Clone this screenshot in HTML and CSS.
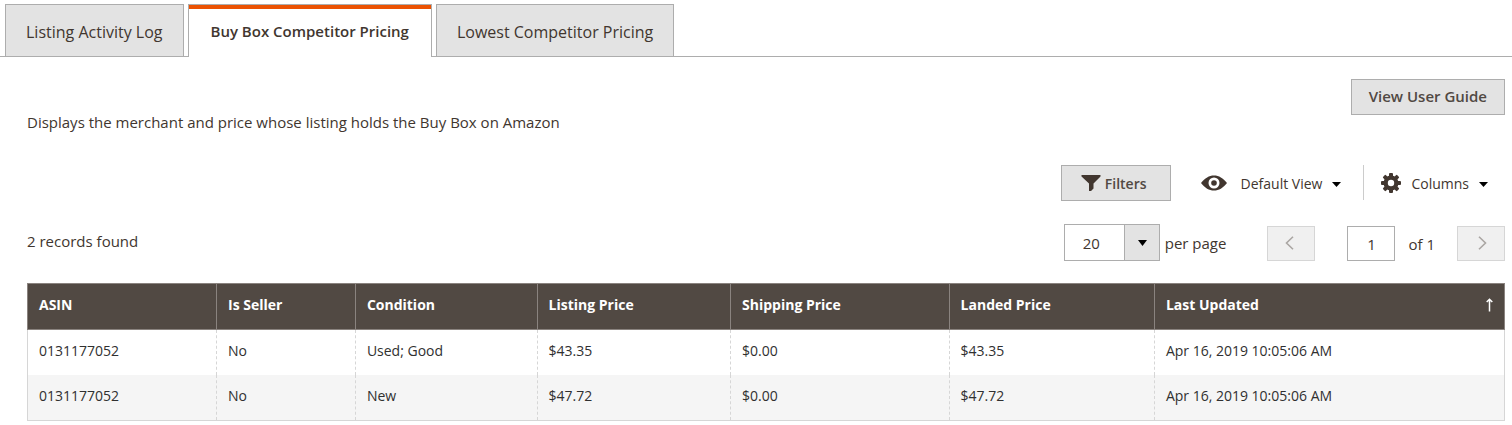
FILE: index.html
```html
<!DOCTYPE html>
<html lang="en">
<head>
<meta charset="utf-8">
<meta name="viewport" content="width=device-width, initial-scale=1">
<title>Buy Box Competitor Pricing</title>
<link rel="stylesheet" href="styles.css">
</head>
<body>
<nav class="tabs" aria-label="Listing details">
  <a class="tab" href="#activity">Listing Activity Log</a>
  <a class="tab tab-active" href="#buybox" aria-current="page">Buy Box Competitor Pricing</a>
  <a class="tab" href="#lowest">Lowest Competitor Pricing</a>
</nav>
<main class="content">
  <header class="intro">
    <p class="description">Displays the merchant and price whose listing holds the Buy Box on Amazon</p>
    <button class="button guide" type="button">View User Guide</button>
  </header>
  <div class="toolbar">
    <button class="button filters" type="button">
      <svg width="20" height="18" viewBox="0 0 20 18" aria-hidden="true"><path fill="#41362f" d="M0.500 1H19.500V2.500L12.500 9.500V14.500L10 17H8V9.500L0.500 2.500Z"/></svg>
      <span>Filters</span>
    </button>
    <button class="action view" type="button">
      <svg width="26" height="16" viewBox="0 0 26 16" aria-hidden="true"><path fill="#41362f" fill-rule="evenodd" d="M0 8C4 3 8 .5 13 .5S22 3 26 8C22 13 18 15.500 13 15.500S4 13 0 8ZM13 2.500A5.500 5.500 0 1 0 13 13.500A5.500 5.500 0 1 0 13 2.500Z"/><circle cx="13" cy="8" r="2.800" fill="#41362f"/></svg>
      <span class="action-label">Default View</span>
      <svg class="caret" width="9" height="5" viewBox="0 0 9 5" aria-hidden="true"><path d="M0 0H9L4.500 5Z"/></svg>
    </button>
    <button class="action columns" type="button">
      <svg width="20" height="20" viewBox="-10 -10 20 20" aria-hidden="true">
        <g fill="#41362f">
          <rect x="-2" y="-10" width="4" height="20" rx="1"/>
          <rect x="-2" y="-10" width="4" height="20" rx="1" transform="rotate(45)"/>
          <rect x="-2" y="-10" width="4" height="20" rx="1" transform="rotate(90)"/>
          <rect x="-2" y="-10" width="4" height="20" rx="1" transform="rotate(135)"/>
          <circle r="7.500"/>
        </g>
        <circle r="3.200" fill="#fff"/>
      </svg>
      <span class="action-label">Columns</span>
      <svg class="caret" width="9" height="5" viewBox="0 0 9 5" aria-hidden="true"><path d="M0 0H9L4.500 5Z"/></svg>
    </button>
  </div>
  <div class="summary">
    <p class="records">2 records found</p>
    <div class="pager">
      <div class="limit">
        <span class="select-box">
          <select class="size" id="page-size"><option>20</option><option>30</option><option>50</option></select>
          <svg class="select-caret" width="9" height="6" viewBox="0 0 9 6" aria-hidden="true"><path d="M0 0H9L4.500 6Z"/></svg>
        </span>
        <label for="page-size">per page</label>
      </div>
      <button class="step" type="button" aria-label="Previous page" disabled>
        <svg width="9" height="14" viewBox="0 0 9 14" aria-hidden="true"><path d="M8 .7L1.500 7L8 13.300"/></svg>
      </button>
      <div class="page">
        <input class="page-input" id="page-number" type="text" value="1">
        <label for="page-number">of 1</label>
      </div>
      <button class="step step-next" type="button" aria-label="Next page" disabled>
        <svg width="9" height="14" viewBox="0 0 9 14" aria-hidden="true"><path d="M1 .7L7.500 7L1 13.300"/></svg>
      </button>
    </div>
  </div>
  <table class="grid">
    <colgroup>
      <col class="col-asin"><col class="col-seller"><col class="col-condition"><col class="col-listing"><col class="col-shipping"><col class="col-landed"><col>
    </colgroup>
    <thead>
      <tr>
        <th scope="col">ASIN</th><th scope="col">Is Seller</th><th scope="col">Condition</th><th scope="col">Listing Price</th><th scope="col">Shipping Price</th><th scope="col">Landed Price</th>
        <th scope="col" aria-sort="ascending"><div class="sorted"><span>Last Updated</span><svg width="7" height="14" viewBox="0 0 7 14" aria-hidden="true"><path d="M3.500 13.500V1.500M.7 4L3.500 1.200L6.300 4"/></svg></div></th>
      </tr>
    </thead>
    <tbody>
      <tr><td>0131177052</td><td>No</td><td>Used; Good</td><td>$43.35</td><td>$0.00</td><td>$43.35</td><td>Apr 16, 2019 10:05:06 AM</td></tr>
      <tr><td>0131177052</td><td>No</td><td>New</td><td>$47.72</td><td>$0.00</td><td>$47.72</td><td>Apr 16, 2019 10:05:06 AM</td></tr>
    </tbody>
  </table>
</main>
</body>
</html>
```
FILE: styles.css
```css
* {
  box-sizing: border-box;
}

body {
  margin: 0;
  background: #fff;
  color: #41362f;
  font: 15px/20px "Open Sans", sans-serif;
}

p {
  margin: 0;
}

button,
input,
select {
  color: inherit;
  font: inherit;
}

.tabs {
  display: flex;
  gap: 4px;
  padding: 4px 0 0 5px;
  box-shadow: inset 0 -1px #adadad;
}

.tab {
  height: 53px;
  padding: 17px 20px 0;
  border: 1px solid #adadad;
  background: #e3e3e3;
  color: inherit;
  font-size: 16px;
  text-decoration: none;
  white-space: nowrap;
}

.tab-active {
  padding: 16px 22px 0;
  border-bottom: 0;
  background: #fff;
  box-shadow: inset 0 4px #eb5202;
  font-size: 15px;
  font-weight: 600;
}

.content {
  padding: 22px 7px 0 27px;
}

.intro {
  display: flex;
  justify-content: space-between;
  height: 54px;
}

.description {
  align-self: flex-end;
  padding-bottom: 1px;
}

.button {
  height: 36px;
  padding: 0 17px 2px;
  border: 1px solid #adadad;
  background: #e3e3e3;
  color: #514943;
  font-weight: 600;
}

.toolbar {
  display: flex;
  justify-content: flex-end;
  margin-top: 32px;
  font-size: 14px;
}

.filters {
  display: flex;
  align-items: center;
  gap: 4px;
  padding: 0 23px 0 19px;
}

.filters span,
.action-label {
  padding-top: 2px;
}

.action {
  display: flex;
  align-items: center;
  height: 35px;
  padding: 0;
  border: 0;
  background: none;
}

.view {
  gap: 14px;
  padding: 0 22px 0 30px;
  border-right: 1px solid #ccc;
}

.columns {
  gap: 10px;
  padding: 0 17px;
}

.caret {
  margin-top: 3px;
}

.view .caret {
  margin-left: -4px;
}

.summary {
  display: flex;
  justify-content: space-between;
  align-items: flex-start;
  margin-top: 23px;
}

.records {
  padding-top: 7px;
}

.pager {
  display: flex;
  align-items: flex-end;
}

.limit,
.page {
  display: flex;
  align-items: center;
}

.limit {
  gap: 5px;
  margin-right: 41px;
}

.page {
  gap: 13px;
  margin: 0 22px 0 32px;
}

.select-box {
  position: relative;
  display: flex;
}

.size {
  width: 96px;
  height: 37px;
  padding: 0 18px;
  border: 1px solid #adadad;
  border-radius: 0;
  background: linear-gradient(to left, #e3e3e3 34px, #adadad 34px 35px, #fff 35px);
  appearance: none;
}

.select-caret {
  position: absolute;
  top: 16px;
  right: 13px;
  pointer-events: none;
}

.step {
  display: flex;
  align-items: center;
  justify-content: center;
  width: 48px;
  height: 35px;
  padding: 0 4px 2px 0;
  border: 1px solid #d6d6d6;
  background: #f0f0f0;
}

.step-next {
  padding: 0 0 2px 2px;
}

.step path {
  fill: none;
  stroke: #aaa6a3;
  stroke-width: 1.600;
}

.page-input {
  width: 48px;
  height: 35px;
  padding: 0;
  border: 1px solid #adadad;
  background: #fff;
  text-align: center;
}

.grid {
  width: 100%;
  margin-top: 22px;
  border-collapse: collapse;
  table-layout: fixed;
  color: #303030;
  font-size: 14px;
}

.col-asin { width: 12.8%; }
.col-seller { width: 9.4%; }
.col-condition { width: 12.3%; }
.col-listing { width: 13.1%; }
.col-shipping { width: 14.8%; }
.col-landed { width: 13.9%; }

.grid th {
  height: 46px;
  padding: 0 11px 3px;
  border: 1px solid #8a837f;
  background: #514943;
  color: #fff;
  font-weight: 700;
  text-align: left;
}

.grid td {
  height: 45px;
  padding: 0 11px 3px;
  border-right: 1px dashed #d6d6d6;
}

.grid td:first-child {
  border-left: 1px solid #d6d6d6;
}

.grid td:last-child {
  border-right: 1px solid #d6d6d6;
}

.grid tbody tr:last-child {
  border-bottom: 1px solid #d6d6d6;
}

.grid tbody tr:last-child td {
  height: 46px;
}

.grid tbody tr:nth-child(even) {
  background: #f5f5f5;
}

.sorted {
  display: flex;
  align-items: center;
  justify-content: space-between;
}

.sorted path {
  fill: none;
  stroke: #fff;
  stroke-width: 1.500;
}
```
